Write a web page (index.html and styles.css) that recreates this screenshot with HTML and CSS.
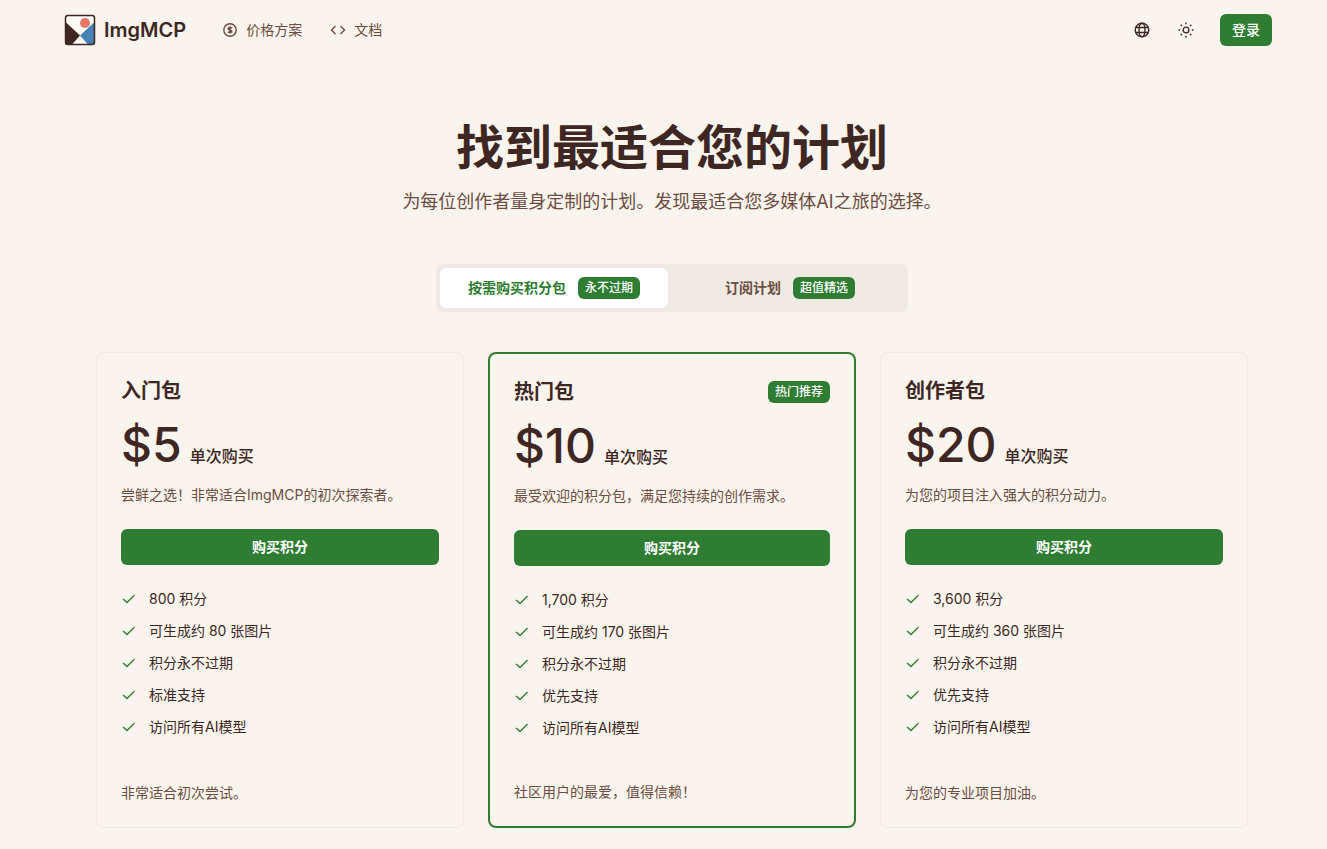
FILE: index.html
```html
<!DOCTYPE html>
<html lang="zh-CN">
<head>
    <meta charset="UTF-8">
    <meta name="viewport" content="width=device-width, initial-scale=1">
    <title>ImgMCP</title>
    <link rel="stylesheet" href="styles.css">
</head>

<body>
    <svg class="sprite" aria-hidden="true">
        <symbol id="check" viewBox="0 0 16 16">
            <path d="M2 8 L6 11.5 L13.5 4" fill="none" stroke="currentColor" stroke-width="1.3"/>
        </symbol>
    </svg>

    <header class="header">
        <a class="logo" href="#">
            <svg class="logo-img" viewBox="0 0 32 32" aria-hidden="true">
                <rect x="1.5" y="1.5" width="29" height="29" rx="2.5" fill="#fdf9f4"/>
                <path d="M1.5 8 L16 21.5 L8 30.5 H1.5 Z" fill="#3e2723"/>
                <path d="M30.5 8 L16 21.5 L24 30.5 H30.5 Z" fill="#4682b4"/>
                <circle cx="21" cy="9" r="5" fill="#e57868"/>
                <rect x="1.5" y="1.5" width="29" height="29" rx="2.5" fill="none" stroke="#3e2723" stroke-width="1.5"/>
            </svg>
            <span>ImgMCP</span>
        </a>
        <nav class="nav">
            <a class="nav-link" href="#">
                <svg class="icon" viewBox="0 0 16 16" aria-hidden="true">
                    <circle cx="8" cy="8" r="6.2" fill="none" stroke="currentColor" stroke-width="1.4"/>
                    <path d="M9.8 6.4 C9.4 5.8 8.8 5.5 8 5.5 C6.8 5.5 6.2 6 6.2 6.7 C6.2 7.5 6.9 7.8 8 8 C9.1 8.2 9.8 8.5 9.8 9.3 C9.8 10 9.1 10.5 8 10.5 C7.1 10.5 6.5 10.2 6.2 9.6 M8 4.5 V11.5" fill="none" stroke="currentColor" stroke-width="1.6"/>
                </svg>
                <span>价格方案</span>
            </a>
            <a class="nav-link" href="#">
                <svg class="icon" viewBox="0 0 16 16" aria-hidden="true">
                    <path d="M5.5 4 L1.5 8 L5.5 12 M10.5 4 L14.5 8 L10.5 12" fill="none" stroke="currentColor" stroke-width="1.4"/>
                </svg>
                <span>文档</span>
            </a>
        </nav>
        <div class="header-right">
            <button class="icon-button" type="button" aria-label="语言">
                <svg class="icon" viewBox="0 0 16 16" fill="none" stroke="currentColor" stroke-width="1.4" aria-hidden="true">
                    <circle cx="8" cy="8" r="6.8"/>
                    <ellipse cx="8" cy="8" rx="3" ry="6.8"/>
                    <path d="M1.5 5.5 H14.5 M1.5 10.5 H14.5"/>
                </svg>
            </button>
            <button class="icon-button" type="button" aria-label="主题">
                <svg class="icon" viewBox="0 0 16 16" fill="none" stroke="currentColor" stroke-width="1.4" aria-hidden="true">
                    <circle cx="8" cy="8" r="2.9"/>
                    <path d="M8 0.5 V2.2 M8 13.8 V15.5 M0.5 8 H2.2 M13.8 8 H15.5 M2.7 2.7 L3.9 3.9 M12.1 12.1 L13.3 13.3 M2.7 13.3 L3.9 12.1 M12.1 3.9 L13.3 2.7"/>
                </svg>
            </button>
            <button class="login" type="button">登录</button>
        </div>
    </header>

    <main class="main">
        <h1 class="title">找到最适合您的计划</h1>
        <p class="subtitle">为每位创作者量身定制的计划。发现最适合您多媒体AI之旅的选择。</p>

        <div class="tabs" role="tablist">
            <button class="tab tab-active" type="button" role="tab" aria-selected="true">
                按需购买积分包 <span class="badge">永不过期</span>
            </button>
            <button class="tab" type="button" role="tab" aria-selected="false">
                订阅计划 <span class="badge">超值精选</span>
            </button>
        </div>

        <div class="cards">
            <section class="card">
                <div class="card-head">
                    <h2 class="card-title">入门包</h2>
                </div>
                <div class="price"><span class="price-num">$5</span><span>单次购买</span></div>
                <p class="card-text">尝鲜之选！非常适合ImgMCP的初次探索者。</p>
                <button class="buy" type="button">购买积分</button>
                <ul class="features">
                    <li><svg class="icon check"><use href="#check"/></svg>800 积分</li>
                    <li><svg class="icon check"><use href="#check"/></svg>可生成约 80 张图片</li>
                    <li><svg class="icon check"><use href="#check"/></svg>积分永不过期</li>
                    <li><svg class="icon check"><use href="#check"/></svg>标准支持</li>
                    <li><svg class="icon check"><use href="#check"/></svg>访问所有AI模型</li>
                </ul>
                <p class="card-foot">非常适合初次尝试。</p>
            </section>

            <section class="card card-hot">
                <div class="card-head">
                    <h2 class="card-title">热门包</h2>
                    <span class="badge">热门推荐</span>
                </div>
                <div class="price"><span class="price-num">$10</span><span>单次购买</span></div>
                <p class="card-text">最受欢迎的积分包，满足您持续的创作需求。</p>
                <button class="buy" type="button">购买积分</button>
                <ul class="features">
                    <li><svg class="icon check"><use href="#check"/></svg>1,700 积分</li>
                    <li><svg class="icon check"><use href="#check"/></svg>可生成约 170 张图片</li>
                    <li><svg class="icon check"><use href="#check"/></svg>积分永不过期</li>
                    <li><svg class="icon check"><use href="#check"/></svg>优先支持</li>
                    <li><svg class="icon check"><use href="#check"/></svg>访问所有AI模型</li>
                </ul>
                <p class="card-foot">社区用户的最爱，值得信赖！</p>
            </section>

            <section class="card">
                <div class="card-head">
                    <h2 class="card-title">创作者包</h2>
                </div>
                <div class="price"><span class="price-num">$20</span><span>单次购买</span></div>
                <p class="card-text">为您的项目注入强大的积分动力。</p>
                <button class="buy" type="button">购买积分</button>
                <ul class="features">
                    <li><svg class="icon check"><use href="#check"/></svg>3,600 积分</li>
                    <li><svg class="icon check"><use href="#check"/></svg>可生成约 360 张图片</li>
                    <li><svg class="icon check"><use href="#check"/></svg>积分永不过期</li>
                    <li><svg class="icon check"><use href="#check"/></svg>优先支持</li>
                    <li><svg class="icon check"><use href="#check"/></svg>访问所有AI模型</li>
                </ul>
                <p class="card-foot">为您的专业项目加油。</p>
            </section>
        </div>
    </main>
</body>
</html>
```
FILE: styles.css
```css
* {
    box-sizing: border-box;
    margin: 0;
    padding: 0;
}
body {
    padding-left: 17px;
    background: #f9f4ed;
    color: #3e2723;
    font: 14px/20px Inter, "Noto Sans CJK SC", sans-serif;
}
a {
    color: inherit;
    text-decoration: none;
}
button {
    border: 0;
    font: inherit;
    color: inherit;
    background: none;
    cursor: pointer;
}
.sprite {
    display: none;
}
.icon {
    display: block;
    flex: none;
    width: 16px;
    height: 16px;
}

/* header */
.header {
    display: flex;
    align-items: center;
    max-width: 1280px;
    height: 60px;
    margin: 0 auto;
    padding: 0 40px 0 32px;
}
.logo {
    display: flex;
    align-items: center;
    gap: 8px;
    font-size: 20px;
    font-weight: 600;
}
.logo-img {
    width: 32px;
    height: 32px;
}
.nav {
    display: flex;
    gap: 28px;
    margin-left: 36px;
    color: #6d4c41;
}
.nav-link {
    display: flex;
    align-items: center;
    gap: 8px;
}
.header-right {
    display: flex;
    align-items: center;
    gap: 8px;
    margin-left: auto;
}
.icon-button {
    display: flex;
    align-items: center;
    justify-content: center;
    width: 36px;
    height: 36px;
}
.login {
    height: 32px;
    margin-left: 8px;
    padding: 0 12px;
    border-radius: 6px;
    background: #2e7d32;
    color: #fff;
    font-weight: 500;
}

/* heading */
.main {
    max-width: 1216px;
    margin: 0 auto;
    padding: 64px 32px 20px;
}
.title {
    font-size: 48px;
    line-height: 48px;
    font-weight: 700;
    text-align: center;
}
.subtitle {
    margin-top: 16px;
    color: #6d4c41;
    font-size: 18px;
    line-height: 28px;
    text-align: center;
}

/* tabs */
.tabs {
    display: grid;
    grid-template-columns: 1fr 1fr;
    gap: 8px;
    max-width: 472px;
    margin: 48px auto 40px;
    padding: 4px;
    border-radius: 6px;
    background: #efeae4;
}
.tab {
    display: flex;
    align-items: center;
    justify-content: center;
    gap: 12px;
    height: 40px;
    border-radius: 6px;
    color: #6d4c41;
    font-weight: 600;
}
.tab-active {
    background: #fff;
    color: #2e7d32;
}
.badge {
    padding: 3px 7px;
    border-radius: 6px;
    background: #2e7d32;
    color: #fff;
    font-size: 12px;
    line-height: 16px;
    font-weight: 500;
}

/* cards */
.cards {
    display: grid;
    grid-template-columns: repeat(3, 1fr);
    gap: 24px;
}
.card {
    display: flex;
    flex-direction: column;
    padding: 24px;
    border: 1px solid #f0eae3;
    border-radius: 8px;
}
.card-hot {
    border: 2px solid #2e7d32;
}
.card-head {
    display: flex;
    align-items: center;
    justify-content: space-between;
    height: 28px;
}
.card-title {
    font-size: 20px;
    line-height: 28px;
    font-weight: 700;
}
.price {
    display: flex;
    align-items: baseline;
    gap: 8px;
    margin-top: 16px;
    font-size: 16px;
    line-height: 24px;
    font-weight: 500;
}
.price-num {
    font-size: 48px;
    line-height: 48px;
}
.card-text {
    margin-top: 16px;
    color: #6d4c41;
}
.buy {
    height: 36px;
    margin-top: 24px;
    border-radius: 6px;
    background: #2e7d32;
    color: #fff;
    font-weight: 600;
}
.features {
    display: grid;
    gap: 12px;
    margin-top: 24px;
    list-style: none;
}
.features li {
    display: flex;
    align-items: center;
    gap: 12px;
}
.check {
    color: #2e7d32;
}
.card-foot {
    margin-top: auto;
    padding-top: 44px;
    color: #6d4c41;
}
```
